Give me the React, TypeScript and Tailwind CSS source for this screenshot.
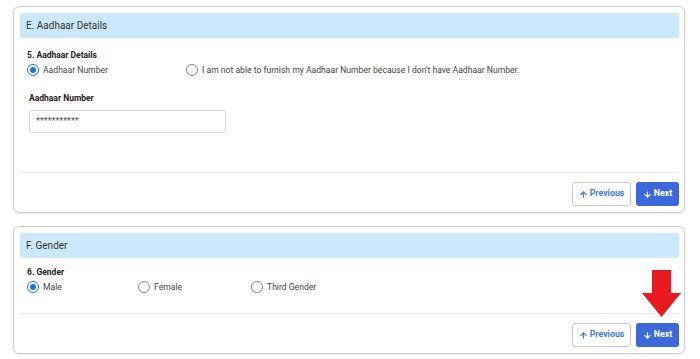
import React from 'react';
import { ArrowUp, ArrowDown } from 'lucide-react';

function Radio({ checked, label, className = '' }: { checked?: boolean; label: string; className?: string }) {
  return (
    <label className={`flex h-[14px] items-center gap-[4px] text-[8.6px] text-[#444] ${className}`}>
      <span
        className={`flex h-[12px] w-[12px] items-center justify-center rounded-full border ${
          checked ? 'border-[#1a73e8] border-[1.5px]' : 'border-[#888]'
        }`}
      >
        {checked && <span className="h-[6px] w-[6px] rounded-full bg-[#1a73e8]" />}
      </span>
      {label}
    </label>
  );
}

function NavButtons() {
  return (
    <div className="flex justify-end gap-[5px] pt-[9px]">
      <button className="flex h-[24px] w-[59px] items-center justify-center gap-[2px] rounded-[3px] border border-[#c9c9c9] bg-white text-[8.8px] font-bold text-[#3f7be0]">
        <ArrowUp className="h-[9px] w-[9px]" strokeWidth={3} />
        Previous
      </button>
      <button className="flex h-[24px] w-[43px] items-center justify-center gap-[2px] rounded-[3px] bg-[#3d68dc] text-[8.8px] font-bold text-white">
        <ArrowDown className="h-[9px] w-[9px]" strokeWidth={3} />
        Next
      </button>
    </div>
  );
}

function Card({ title, children, footerExtra }: { title: string; children: React.ReactNode; footerExtra?: React.ReactNode }) {
  return (
    <div className="relative rounded-[6px] border border-[#cfcfcf] bg-white pb-[6px] pl-[6px] pr-[5px] pt-[6px] shadow-[0_1px_2px_rgba(0,0,0,0.08)]">
      <div className="flex h-[25px] items-center rounded-[2px] bg-[#cbe9fc] px-[6px] text-[10px] text-[#333]">{title}</div>
      <div className="px-[7px]">{children}</div>
      <div className="border-t border-[#e8e8e8]">
        <NavButtons />
      </div>
      {footerExtra}
    </div>
  );
}

function RedArrow() {
  return (
    <svg className="absolute right-[2px] top-[43px]" width="40" height="48" viewBox="0 0 40 48">
      <path d="M10 0 H29 V23 H39 L19.5 47 L0 23 H10 Z" fill="#e8191f" />
    </svg>
  );
}

export default function App() {
  return (
    <div className="min-h-[359px] w-[700px] bg-white pl-[13px] pr-[15px] pt-[6px]" style={{ fontFamily: 'Roboto, "Liberation Sans", sans-serif' }}>
      <Card title="E. Aadhaar Details">
        <div className="pb-[39px] pt-[10px]">
          <div className="text-[8.5px] font-bold leading-[14px] text-[#222]">5. Aadhaar Details</div>
          <div className="mt-[1px] flex items-center">
            <Radio checked label="Aadhaar Number" className="w-[159px]" />
            <Radio label="I am not able to furnish my Aadhaar Number because I don't have Aadhaar Number." />
          </div>
          <div className="mt-[14px] pl-[2px] text-[8.5px] font-bold leading-[14px] text-[#222]">Aadhaar Number</div>
          <div className="ml-[2px] mt-[5px] flex h-[23px] w-[197px] items-center rounded-[3px] border border-[#d6d6d6] px-[6px] text-[9px] text-[#555]">
            ***********
          </div>
        </div>
      </Card>
      <div className="mt-[13px]">
        <Card title="F. Gender" footerExtra={<RedArrow />}>
          <div className="pb-[19px] pt-[7px]">
            <div className="text-[8.5px] font-bold leading-[14px] text-[#222]">6. Gender</div>
            <div className="mt-[1px] flex items-center">
              <Radio checked label="Male" className="w-[111px]" />
              <Radio label="Female" className="w-[113px]" />
              <Radio label="Third Gender" />
            </div>
          </div>
        </Card>
      </div>
    </div>
  );
}
